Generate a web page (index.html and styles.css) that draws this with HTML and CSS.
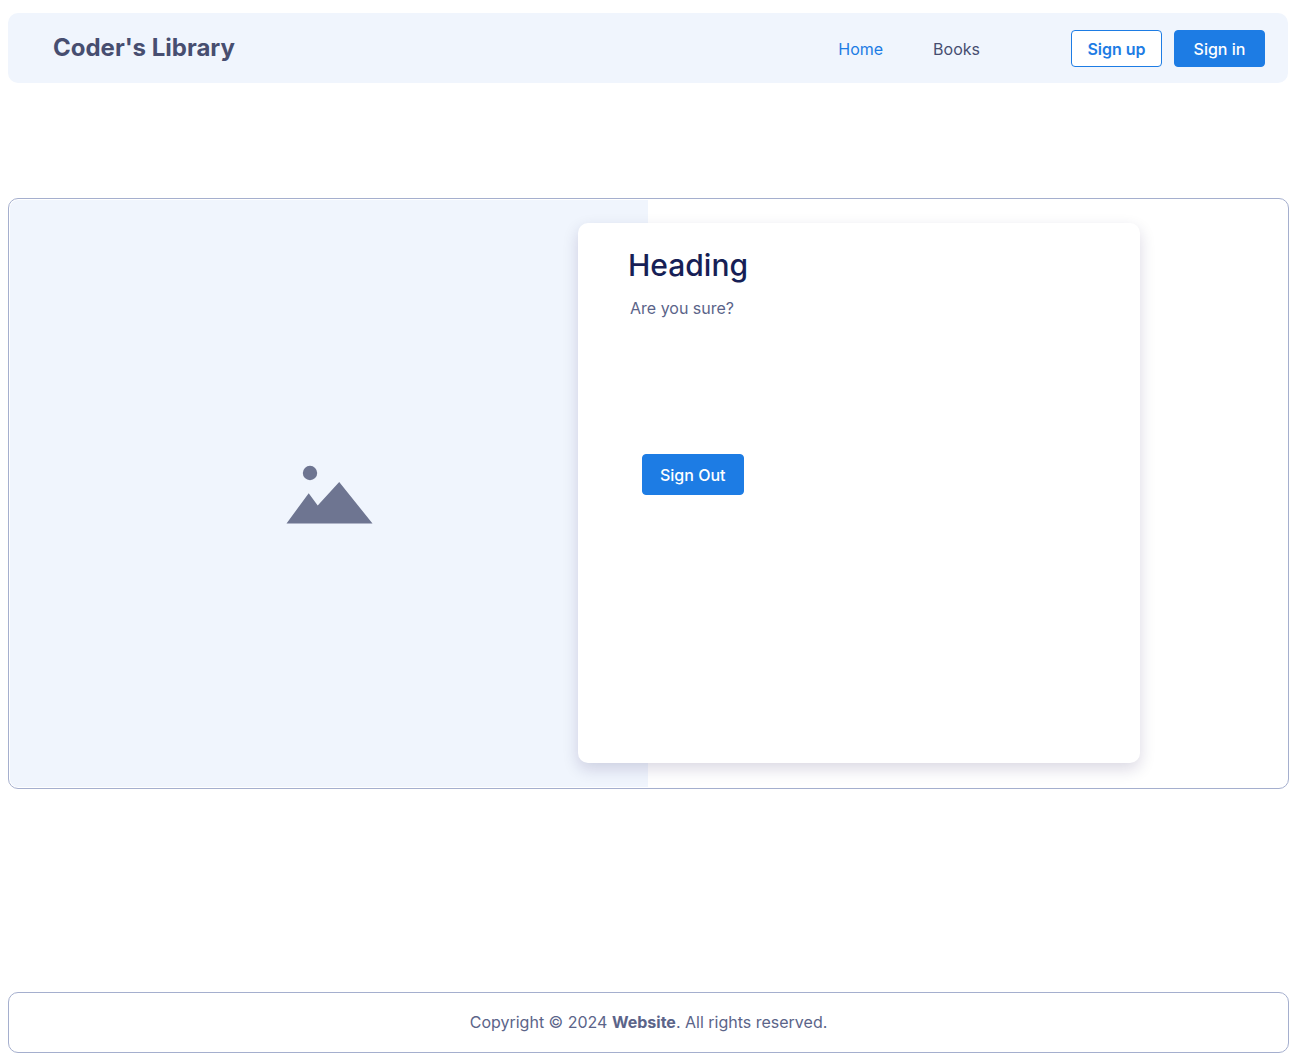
FILE: index.html
```html
<!DOCTYPE html>
<html lang="en">
<head>
  <meta charset="utf-8">
  <meta name="viewport" content="width=device-width, initial-scale=1">
  <title>Coder's Library</title>
  <link rel="stylesheet" href="styles.css">
</head>
<body>
  <header class="site-header">
    <a class="brand" href="#">Coder's Library</a>
    <nav class="nav" aria-label="Main">
      <a class="nav-link nav-link-active" href="#">Home</a>
      <a class="nav-link" href="#">Books</a>
    </nav>
    <div class="actions">
      <button class="btn btn-outline" type="button">Sign up</button>
      <button class="btn btn-primary" type="button">Sign in</button>
    </div>
  </header>

  <main class="panel">
    <div class="placeholder">
      <svg class="placeholder-icon" viewBox="0 0 88 60" aria-hidden="true">
        <circle cx="25" cy="9" r="7.2"/>
        <path d="M1.5 59.5 23.7 29.2 32.7 41.5 54.2 18 87.5 59.5Z"/>
      </svg>
    </div>
    <section class="card">
      <h1 class="card-title">Heading</h1>
      <p class="card-text">Are you sure?</p>
      <button class="btn btn-primary btn-large" type="button">Sign Out</button>
    </section>
  </main>

  <footer class="site-footer">
    <p class="copyright">Copyright © 2024 <strong>Website</strong>. All rights reserved.</p>
  </footer>
</body>
</html>
```
FILE: styles.css
```css
* {
  box-sizing: border-box;
}

body {
  display: flex;
  flex-direction: column;
  min-height: 100vh;
  margin: 0;
  padding: 13px 12px 8px 8px;
  background: #fff;
  color: #474e70;
  font: 16px/24px Inter, sans-serif;
}

h1,
p {
  margin: 0;
}

.site-header {
  display: flex;
  align-items: center;
  margin-right: 1px;
  padding: 17px 23px 16px 45px;
  border-radius: 10px;
  background: #f0f5fd;
}

.brand {
  align-self: flex-start;
  margin-right: auto;
  color: #474e70;
  font-size: 24px;
  font-weight: 700;
  line-height: 36px;
  text-decoration: none;
}

.nav {
  display: flex;
  gap: 50px;
  margin-right: 91px;
}

.nav-link {
  color: #474e70;
  text-decoration: none;
}

.nav-link-active {
  color: #1d7ce4;
}

.actions {
  display: flex;
  gap: 12px;
}

.btn {
  min-width: 91px;
  padding: 7px 15px 6px;
  border: 1px solid #1d7ce4;
  border-radius: 4px;
  font: 500 16px/22px Inter, sans-serif;
  cursor: pointer;
}

.btn-outline {
  background: #fff;
  color: #1d7ce4;
  font-weight: 600;
}

.btn-primary {
  background: #1d7ce4;
  color: #fff;
}

.btn-large {
  padding: 9px 17px 8px;
}

.panel {
  display: grid;
  grid-template-columns: 568fr 70fr 492fr 147fr;
  margin-top: 115px;
  padding: 1px;
  border: 1px solid #a5afce;
  border-radius: 10px;
}

.placeholder {
  display: flex;
  grid-area: 1 / 1 / 2 / 3;
  align-items: center;
  justify-content: center;
  border-radius: 8px 0 0 8px;
  background: #f0f5fd;
}

.placeholder-icon {
  width: 88px;
  fill: #6e7591;
}

.card {
  grid-area: 1 / 2 / 2 / 4;
  min-height: 540px;
  margin: 23px 0 24px;
  padding: 20px 50px;
  border-radius: 10px;
  background: #fff;
  box-shadow: 0 6px 16px rgba(25, 15, 80, 0.16);
}

.card-title {
  color: #171f56;
  font-size: 30px;
  font-weight: 500;
  line-height: 44px;
}

.card-text {
  margin: 9px 2px 134px;
  color: #5b6489;
}

.card .btn {
  margin-left: 14px;
}

.site-footer {
  margin-top: auto;
  padding: 17px 17px 18px;
  border: 1px solid #a5afce;
  border-radius: 10px;
  color: #5b6489;
  text-align: center;
}
```
